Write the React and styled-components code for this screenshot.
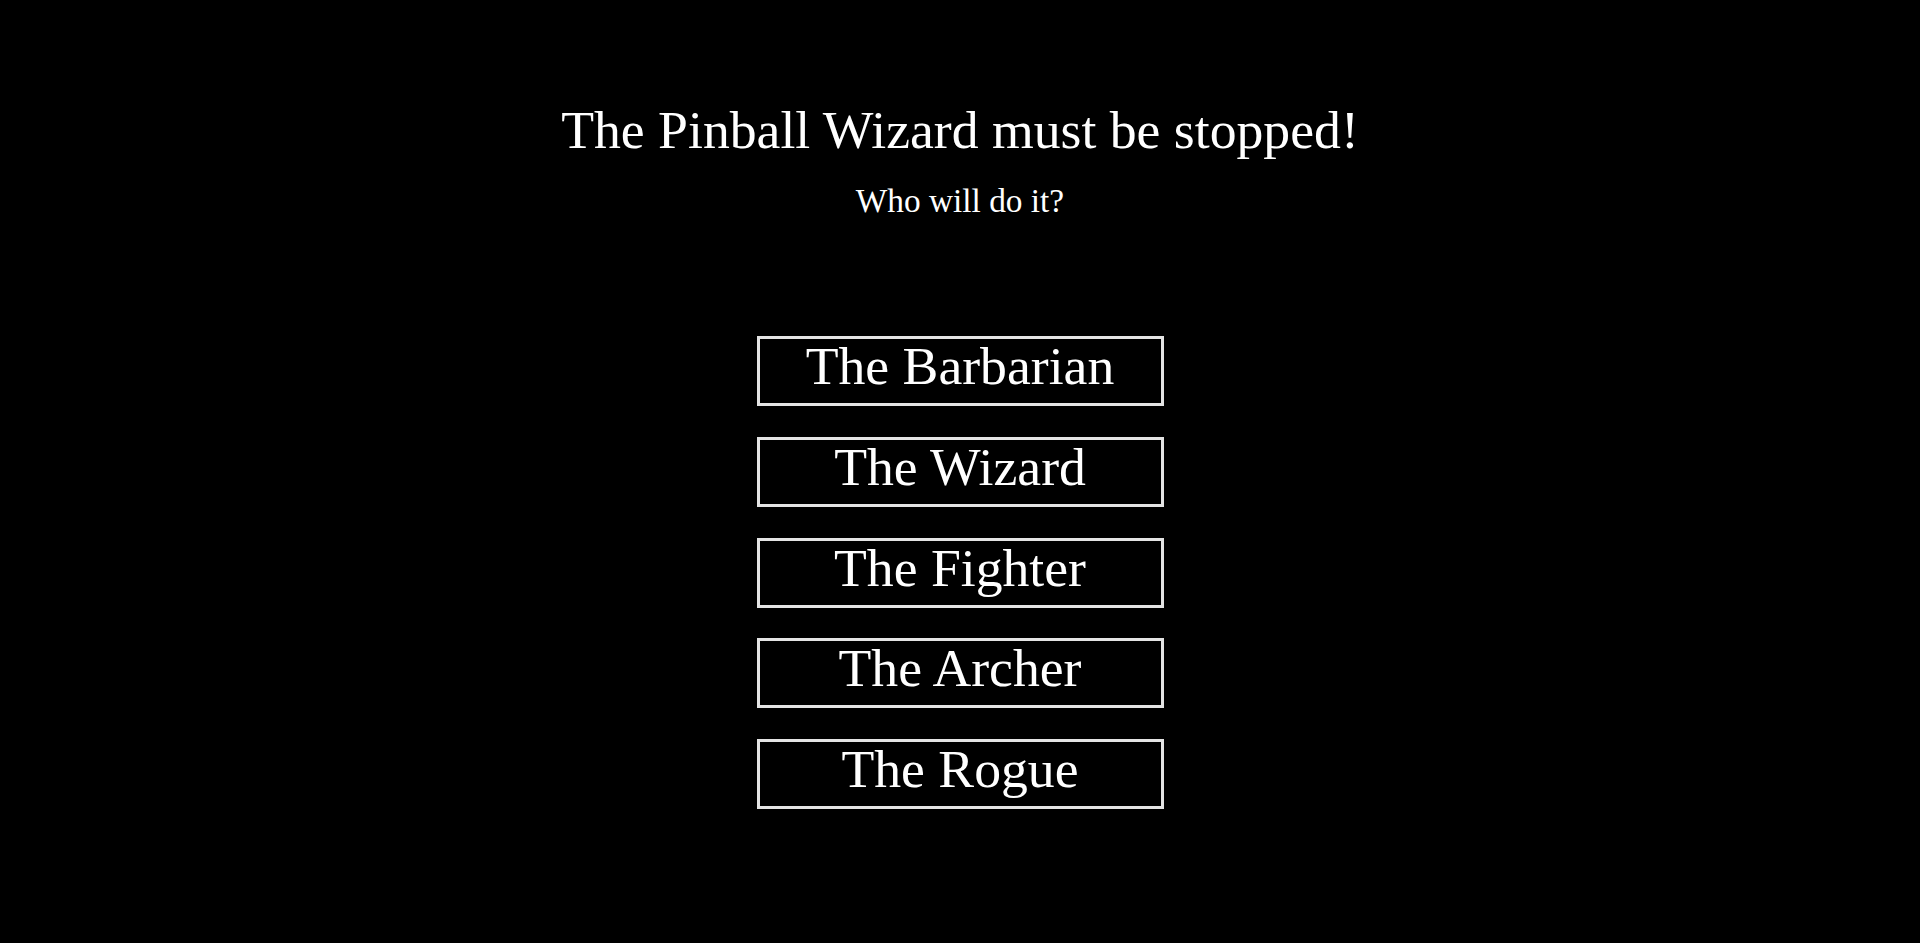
import React from "react";
import styled, { createGlobalStyle } from "styled-components";

const GlobalStyle = createGlobalStyle`
  html, body {
    margin: 0;
    padding: 0;
    background: #000;
  }
  body {
    font-family: "Liberation Serif", "Times New Roman", serif;
    color: #fff;
  }
`;

const Page = styled.main`
  min-height: 943px;
  box-sizing: border-box;
  padding-top: 100px;
  display: flex;
  flex-direction: column;
  align-items: center;
  background: #000;
`;

const Title = styled.h1`
  margin: 0;
  font-size: 53.7px;
  line-height: 60px;
  font-weight: normal;
  color: #fff;
  text-align: center;
`;

const Subtitle = styled.p`
  margin: 22px 0 0;
  font-size: 33.33px;
  line-height: 38px;
  color: #fff;
  text-align: center;
`;

const Choices = styled.div`
  margin-top: 116px;
  display: flex;
  flex-direction: column;
  gap: 30.75px;
`;

const Choice = styled.button`
  box-sizing: border-box;
  width: 407px;
  height: 70px;
  padding: 0;
  margin: 0;
  display: flex;
  justify-content: center;
  align-items: flex-start;
  background: #000;
  color: #fff;
  border: 3px solid #e4e4e4;
  border-radius: 0;
  font-family: "Liberation Serif", "Times New Roman", serif;
  font-size: 53.7px;
  line-height: 54px;
  cursor: pointer;
`;

const heroes = ["The Barbarian", "The Wizard", "The Fighter", "The Archer", "The Rogue"];

export default function App() {
  return (
    <>
      <GlobalStyle />
      <Page>
        <Title>The Pinball Wizard must be stopped!</Title>
        <Subtitle>Who will do it?</Subtitle>
        <Choices>
          {heroes.map((name) => (
            <Choice key={name} type="button">
              {name}
            </Choice>
          ))}
        </Choices>
      </Page>
    </>
  );
}
